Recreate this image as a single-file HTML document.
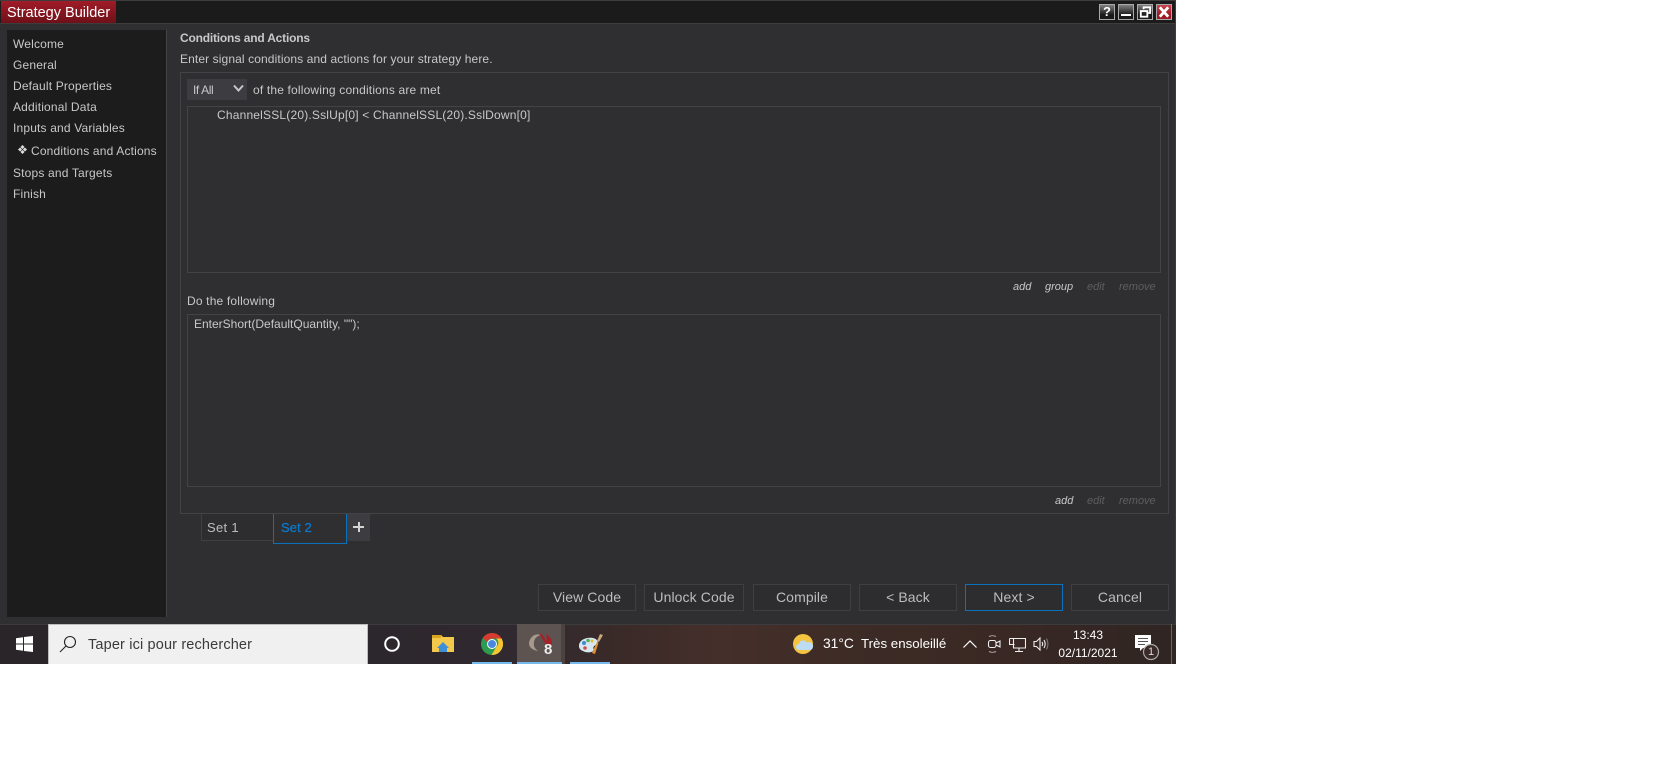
<!DOCTYPE html>
<html><head><meta charset="utf-8"><style>
html,body{margin:0;padding:0;background:#fff;width:1669px;height:778px;overflow:hidden;font-family:"Liberation Sans",Arial,sans-serif}
div,span,svg{position:absolute}
.t{white-space:nowrap;font-size:12px;line-height:16px;height:16px;color:#c8c8c8;letter-spacing:.17px}
.b{box-sizing:border-box;border:1px solid #434345}
.btn{box-sizing:border-box;border:1px solid #3f3f42;background:#2d2d2f;top:584px;height:27px;color:#bdbdbd;font-size:14px;line-height:25px;letter-spacing:.1px;text-align:center;white-space:nowrap}
.i{font-style:italic;font-size:11px;color:#c8c8c8;letter-spacing:0}
.d{color:#5e5e60}
.w{box-sizing:border-box;top:4px;width:16px;height:16px;border:1px solid #a8a8a8;background:linear-gradient(#808080,#1a1a1a 70%)}
.tb{color:#fff;font-size:14px;line-height:18px;height:18px;white-space:nowrap}
.u{top:662px;height:2px;background:#76b9ed}
</style></head><body>
<div style="left:0;top:0;width:1176px;height:624px;background:#2f2f31;border-right:1px solid #3c3c3e;box-sizing:border-box"></div>
<div style="left:0;top:0;width:1175px;height:24px;background:#1b1b1b;border-top:1px solid #3d3d3d;border-bottom:1px solid #3d3d3d;box-sizing:border-box"></div>
<div style="left:1px;top:1px;width:115px;height:22px;background:linear-gradient(#a01c28,#6e1018)"></div>
<div class="t" style="left:7px;top:4px;font-size:14.5px;line-height:18px;height:18px;color:#fff;letter-spacing:0">Strategy Builder</div>

<div class="w" style="left:1099px"><span style="left:0;top:0;width:14px;text-align:center;font:bold 13px/14px 'Liberation Sans';color:#fff">?</span></div>
<div class="w" style="left:1118px"><span style="left:2px;top:9px;width:10px;height:2px;background:#fff"></span></div>
<div class="w" style="left:1137px"><svg style="left:0;top:0" width="14" height="14" viewBox="0 0 15 14" fill="none" stroke="#fff" stroke-width="2"><path d="M6 4V2h7v6h-2"/><path d="M3 6h7v6H3z"/></svg></div>
<div class="w" style="left:1156px;background:linear-gradient(#c94450,#9c1a24 70%)"><svg style="left:0;top:0" width="14" height="14" viewBox="0 0 15 14" stroke="#fff" stroke-width="3"><path d="M3 2l9 10M12 2L3 12"/></svg></div>

<div style="left:7px;top:30px;width:160px;height:587px;background:#1c1c1c;border-right:1px solid #444;box-sizing:border-box"></div>
<div class="t" style="left:13px;top:36px">Welcome</div>
<div class="t" style="left:13px;top:57px">General</div>
<div class="t" style="left:13px;top:78px">Default Properties</div>
<div class="t" style="left:13px;top:99px">Additional Data</div>
<div class="t" style="left:13px;top:120px">Inputs and Variables</div>
<svg style="left:18px;top:145px" width="9" height="9" viewBox="0 0 11 11" fill="#ddd"><path d="M5.500 0l2.500 2.500-2.500 2.500L3 2.500zM2.500 3l2.500 2.500L2.500 8 0 5.500zM8.500 3L11 5.500 8.500 8 6 5.500zM5.500 6l2.500 2.500L5.500 11 3 8.500z"/></svg>
<div class="t" style="left:31px;top:143px">Conditions and Actions</div>
<div class="t" style="left:13px;top:165px">Stops and Targets</div>
<div class="t" style="left:13px;top:186px">Finish</div>

<div class="t" style="left:180px;top:30px;font-weight:bold;letter-spacing:-.2px">Conditions and Actions</div>
<div class="t" style="left:180px;top:51px;letter-spacing:.11px">Enter signal conditions and actions for your strategy here.</div>
<div class="b" style="left:180px;top:72px;width:989px;height:442px"></div>
<div style="left:187px;top:79px;width:60px;height:21px;background:#3c3c41"></div>
<div class="t" style="left:193px;top:82px;letter-spacing:-.4px">If All</div>
<svg style="left:233px;top:84px" width="11" height="9" viewBox="0 0 11 9" fill="none" stroke="#c8c8c8" stroke-width="2"><path d="M1 1.500l4.500 5 4.500-5"/></svg>
<div class="t" style="left:253px;top:82px">of the following conditions are met</div>
<div class="b" style="left:187px;top:106px;width:974px;height:167px"></div>
<div class="t" style="left:217px;top:107px;letter-spacing:.19px">ChannelSSL(20).SslUp[0] &lt; ChannelSSL(20).SslDown[0]</div>
<div class="t i" style="left:1013px;top:279px">add</div>
<div class="t i" style="left:1045px;top:279px">group</div>
<div class="t i d" style="left:1087px;top:279px">edit</div>
<div class="t i d" style="left:1119px;top:279px">remove</div>
<div class="t" style="left:187px;top:293px">Do the following</div>
<div class="b" style="left:187px;top:314px;width:974px;height:173px"></div>
<div class="t" style="left:194px;top:316px;letter-spacing:0">EnterShort(DefaultQuantity, "");</div>
<div class="t i" style="left:1055px;top:493px">add</div>
<div class="t i d" style="left:1087px;top:493px">edit</div>
<div class="t i d" style="left:1119px;top:493px">remove</div>

<div style="left:201px;top:514px;width:72px;height:27px;box-sizing:border-box;border:1px solid #3f3f42;border-top:0;border-right:0;background:#2d2d2f"></div>
<div class="t" style="left:207px;top:520px;font-size:13px;color:#bdbdbd;letter-spacing:.3px">Set 1</div>
<div style="left:273px;top:514px;width:74px;height:30px;box-sizing:border-box;border:1px solid #0a72bd;border-top:0;background:#2f2f31"></div>
<div class="t" style="left:281px;top:520px;font-size:13px;color:#0a78c8;letter-spacing:.1px;-webkit-text-stroke:.3px #0a78c8">Set 2</div>
<div style="left:347px;top:514px;width:23px;height:27px;background:#3c3c41"></div>
<div style="left:353px;top:526px;width:11px;height:2px;background:#d4d4d4"></div>
<div style="left:358px;top:522px;width:2px;height:10px;background:#d4d4d4"></div>

<div class="btn" style="left:538px;width:98px">View Code</div>
<div class="btn" style="left:644px;width:100px">Unlock Code</div>
<div class="btn" style="left:753px;width:98px">Compile</div>
<div class="btn" style="left:859px;width:98px">&lt; Back</div>
<div class="btn" style="left:965px;width:98px;border-color:#0a72bd">Next &gt;</div>
<div class="btn" style="left:1071px;width:98px">Cancel</div>

<!-- taskbar -->
<div style="left:0;top:624px;width:1176px;height:40px;background:linear-gradient(90deg,#2a2528 0,#2c272c 370px,#312930 520px,#3a2a28 620px,#452f2a 720px,#3d2b26 850px,#3a2824 1000px,#2f2523 1176px);border-top:1px solid #3c3c3e;box-sizing:border-box"></div>
<svg style="left:16px;top:636px" width="17" height="16" viewBox="0 0 17 16" fill="#fff"><path d="M0 2.300L7 1.200V7.500H0zM8 1L17 0V7.500H8zM0 8.500H7V14.800L0 13.700zM8 8.500H17V16L8 15z"/></svg>
<div style="left:48px;top:624px;width:320px;height:40px;box-sizing:border-box;background:#f0f0f0;border:1px solid #bdbdbd;border-bottom:0"></div>
<svg style="left:59px;top:635px" width="18" height="18" viewBox="0 0 18 18" fill="none" stroke="#222" stroke-width="1.100"><circle cx="11" cy="7" r="5.500"/><path d="M7 11l-6 6"/></svg>
<div class="tb" style="left:88px;top:636px;color:#3a3a3a;font-size:14.5px;letter-spacing:.15px">Taper ici pour rechercher</div>
<svg style="left:383px;top:635px" width="18" height="18"><circle cx="9" cy="9" r="6.800" fill="none" stroke="#fff" stroke-width="2"/></svg>
<svg style="left:431px;top:634px" width="24" height="20" viewBox="0 0 24 20"><path d="M1 1h9l2 2h11v15H1z" fill="#f4c84a"/><path d="M1 1h9v3H1z" fill="#d9a520"/><path d="M8 18v-4l-2 0 6-6 6 6-2 0v4z" fill="#3d8fd8"/></svg>
<svg style="left:481px;top:633px" width="22" height="22" viewBox="0 0 22 22"><circle cx="11" cy="11" r="11" fill="#2c9c50"/><path d="M11 0a11 11 0 0 1 9.500 5.500H11a5.500 5.500 0 0 0-5 3.500L1.800 5A11 11 0 0 1 11 0z" fill="#d93a30"/><path d="M20.500 5.500A11 11 0 0 1 10.500 22l4.800-8a5.500 5.500 0 0 0 0-8.500z" fill="#f6c530"/><circle cx="11" cy="11" r="5" fill="#fff"/><circle cx="11" cy="11" r="4" fill="#4a88e0"/></svg>
<div style="left:517px;top:624px;width:44px;height:40px;background:#5d5351"></div>
<div style="left:561px;top:624px;width:4px;height:40px;background:#4a4342"></div>
<svg style="left:528px;top:632px" width="26" height="22" viewBox="0 0 26 22"><path d="M1 11C2 4 8 1 13 3 8 4 5 8 6 14 7 17 9 18 10 19 5 18 1 16 1 11z" fill="#a8998c"/><path d="M11 1c4 1 6 5 7 9 1-3 1-6 0-8 4 2 6 6 6 10l-3 2-3-2C15 9 13 5 11 1z" fill="#a62028"/></svg>
<div class="t" style="left:544px;top:641px;font-size:15px;font-weight:bold;color:#eee;line-height:18px;height:18px;letter-spacing:0">8</div>
<svg style="left:578px;top:632px" width="26" height="24" viewBox="0 0 26 24"><path d="M1 14C1 8 8 5 15 6c5 1 6 5 3 7-3 1-3 3-2 5-2 3-8 3-11 1-3-1-4-3-4-5z" fill="#d6e6f2"/><circle cx="6" cy="11" r="2" fill="#3f8ad0"/><circle cx="10" cy="8.500" r="1.800" fill="#55b050"/><circle cx="14" cy="9" r="1.500" fill="#e0c030"/><circle cx="7" cy="16" r="1.800" fill="#d05050"/><path d="M14 21l5-11 1.500.700L17 22z" fill="#e09030"/><path d="M19 9l3-7 3 1-4 7z" fill="#c9a878"/></svg>
<div class="u" style="left:472px;width:40px"></div>
<div class="u" style="left:517px;width:45px"></div>
<div class="u" style="left:570px;width:40px"></div>

<svg style="left:793px;top:634px" width="22" height="21" viewBox="0 0 22 21"><circle cx="10" cy="10" r="10" fill="#f4c33f"/><path d="M6 16a3 3 0 0 1 0-6 4 4 0 0 1 7.500-1.500A3.500 3.500 0 0 1 18 16z" fill="#bcdcf4"/></svg>
<div class="tb" style="left:823px;top:635px;font-size:13.8px">31°C</div>
<div class="tb" style="left:861px;top:635px;font-size:13.3px">Très ensoleillé</div>
<svg style="left:962px;top:639px" width="16" height="10" viewBox="0 0 16 10" fill="none" stroke="#fff" stroke-width="1.200"><path d="M1.500 8.500L8 2l6.500 6.500"/></svg>
<svg style="left:986px;top:635px" width="16" height="18" viewBox="0 0 16 18" fill="none" stroke="#eee" stroke-width="1.100"><rect x="2.500" y="5.500" width="7.500" height="7" rx="2"/><path d="M10 8l4-2v6l-4-2"/><path d="M3 1.500c2-1 5-1 7 0M3 16.500c2 1 5 1 7 0" stroke="#aaa"/></svg>
<svg style="left:1009px;top:637px" width="17" height="16" viewBox="0 0 17 16" fill="none" stroke="#eee" stroke-width="1.100"><path d="M4.500 1.500h12v9.500H4.500z"/><path d="M.5 1.500h5M.5 1.500v6h5M10 11v3M6 14.500h8"/></svg>
<svg style="left:1033px;top:637px" width="16" height="14" viewBox="0 0 16 14" fill="none" stroke="#eee" stroke-width="1.100"><path d="M1 4.500h2.500L7 1v12L3.500 9.500H1zM9 5c1 1.500 1 2.500 0 4M11 3c1.500 2.500 1.500 5.500 0 8"/><path d="M13.500 1.500c1.800 3.500 1.800 7.500 0 11" stroke="#777"/></svg>
<div class="t" style="left:1048px;top:627px;width:80px;text-align:center;color:#fff;letter-spacing:0">13:43</div>
<div class="t" style="left:1048px;top:645px;width:80px;text-align:center;color:#fff;letter-spacing:0">02/11/2021</div>
<svg style="left:1134px;top:634px" width="30" height="30" viewBox="0 0 30 30"><path d="M1 1h16v13H9l-3 3v-3H1z" fill="#fff"/><path d="M4 4.500h10M4 7.500h10M4 10.500h7" stroke="#555" stroke-width="1"/><circle cx="17" cy="18" r="7.500" fill="#3a2a28" stroke="#aaa" stroke-width="1.200"/></svg>
<div class="t" style="left:1147px;top:644px;width:8px;text-align:center;color:#ddd;font-size:11px;letter-spacing:0">1</div>
<div style="left:1171px;top:624px;width:1px;height:40px;background:#6a6260"></div>
</body></html>
